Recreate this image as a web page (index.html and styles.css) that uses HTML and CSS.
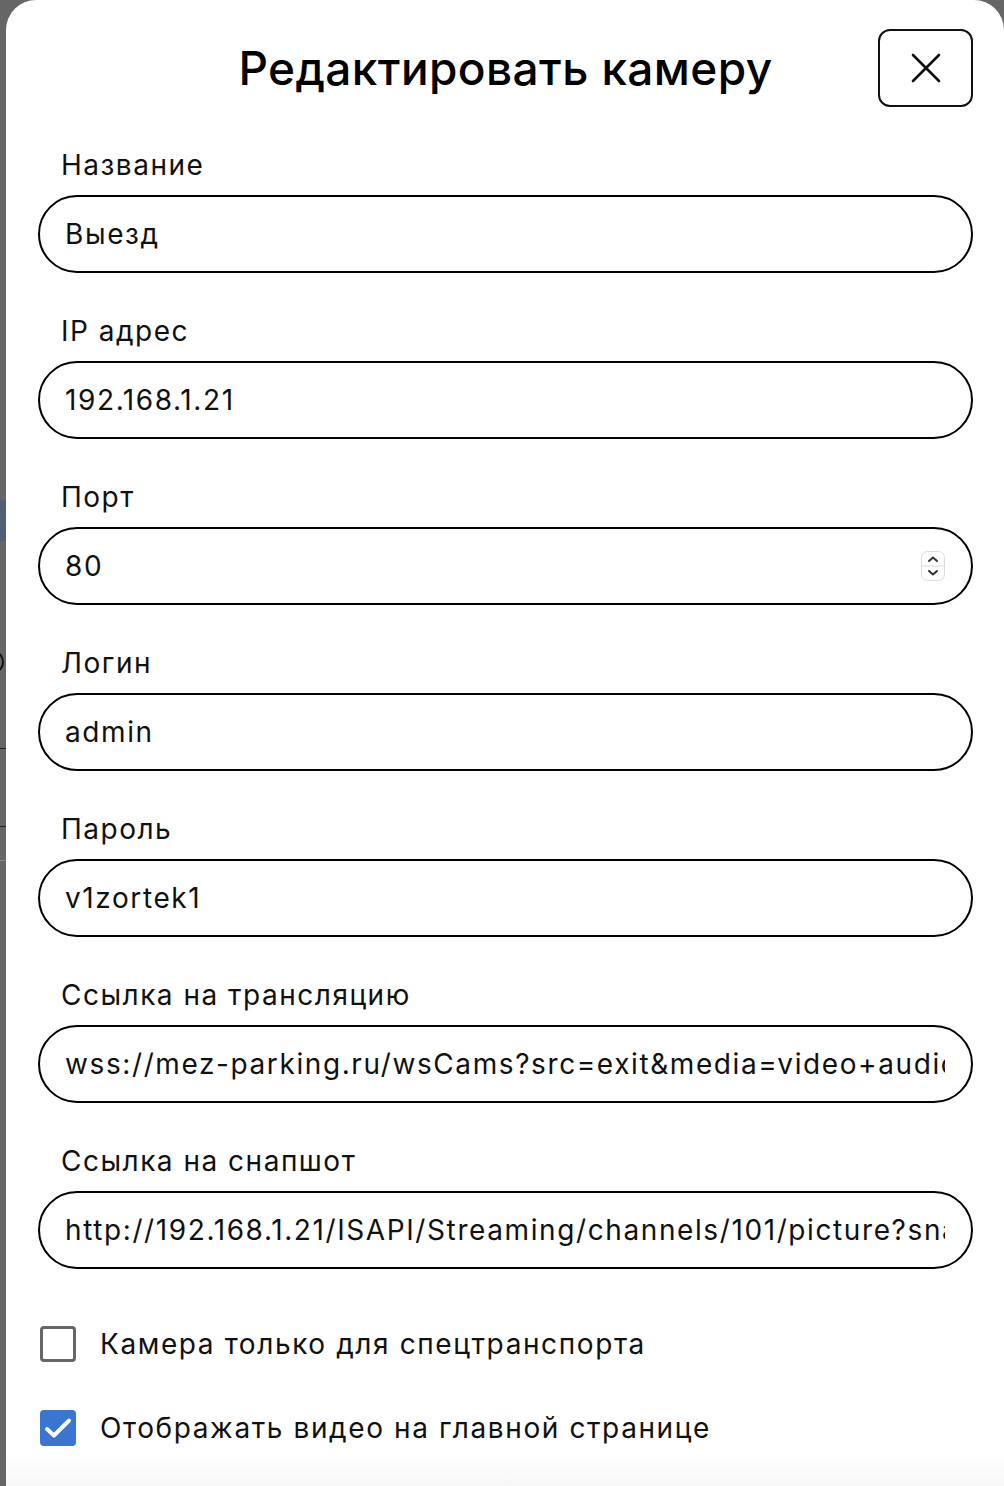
FILE: index.html
```html
<!DOCTYPE html>
<html lang="ru">
<head>
<meta charset="utf-8">
<title>Редактировать камеру</title>
<link rel="stylesheet" href="styles.css">
</head>
<body>
<div class="backdrop">
  <div class="behind">
    <div class="behind-bar"></div>
    <div class="behind-ring"></div>
    <div class="behind-line l1"></div>
    <div class="behind-line l2"></div>
    <div class="behind-line l3"></div>
  </div>
  <div class="modal">
    <header class="modal-header">
      <h1 class="modal-title">Редактировать камеру</h1>
      <button class="close-btn" type="button" aria-label="Закрыть">
        <svg width="30" height="30" viewBox="0 0 30 30"><path d="M2 2 L28 28 M28 2 L2 28" stroke="#111" stroke-width="2.6" stroke-linecap="round" fill="none"/></svg>
      </button>
    </header>
    <form class="form">
      <div class="group">
        <label class="label">Название</label>
        <div class="field"><input class="field-input" type="text" value="Выезд"></div>
      </div>
      <div class="group">
        <label class="label">IP адрес</label>
        <div class="field"><input class="field-input" type="text" value="192.168.1.21"></div>
      </div>
      <div class="group">
        <label class="label">Порт</label>
        <div class="field">
          <input class="field-input" type="text" value="80">
          <span class="spinner">
            <svg width="24" height="30" viewBox="0 0 24 30">
              <rect x="0.5" y="0.5" width="23" height="29" rx="6" fill="#fff" stroke="#dcdcdc"/>
              <line x1="1" y1="15" x2="23" y2="15" stroke="#dcdcdc"/>
              <path d="M8 10 L12 6.5 L16 10" stroke="#333" stroke-width="2" fill="none" stroke-linecap="round" stroke-linejoin="round"/>
              <path d="M8 20 L12 23.5 L16 20" stroke="#333" stroke-width="2" fill="none" stroke-linecap="round" stroke-linejoin="round"/>
            </svg>
          </span>
        </div>
      </div>
      <div class="group">
        <label class="label">Логин</label>
        <div class="field"><input class="field-input" type="text" value="admin"></div>
      </div>
      <div class="group">
        <label class="label">Пароль</label>
        <div class="field"><input class="field-input" type="text" value="v1zortek1"></div>
      </div>
      <div class="group">
        <label class="label">Ссылка на трансляцию</label>
        <div class="field"><input class="field-input" type="text" value="wss://mez-parking.ru/wsCams?src=exit&amp;media=video+audio"></div>
      </div>
      <div class="group">
        <label class="label">Ссылка на снапшот</label>
        <div class="field"><input class="field-input" type="text" value="http://192.168.1.21/ISAPI/Streaming/channels/101/picture?snapShotImageType=JPEG"></div>
      </div>
      <div class="checks">
        <div class="check-row">
          <span class="box"></span>
          <span class="check-text">Камера только для спецтранспорта</span>
        </div>
        <div class="check-row">
          <span class="box checked">
            <svg width="36" height="36" viewBox="0 0 36 36"><path d="M7 19 L14 25.5 L29 10.5" stroke="#fff" stroke-width="4" fill="none" stroke-linecap="round" stroke-linejoin="round"/></svg>
          </span>
          <span class="check-text">Отображать видео на главной странице</span>
        </div>
      </div>
    </form>
  </div>
</div>
</body>
</html>
```
FILE: styles.css
```css
* { box-sizing: border-box; }
html, body { margin: 0; padding: 0; }
body {
  background: #666666;
  font-family: Inter, "Noto Sans", sans-serif;
  color: #111;
  overflow: hidden;
}
.backdrop {
  display: flex;
  min-height: 1486px;
}
.behind {
  width: 6px;
  flex: none;
  position: relative;
}
.behind-bar { position: absolute; left: 0; top: 500px; width: 6px; height: 41px; background: #505f72; }
.behind-ring { position: absolute; left: -12px; top: 652px; width: 16px; height: 20px; border: 2px solid #111; border-radius: 50%; }
.behind-line { position: absolute; left: 0; width: 6px; height: 1px; }
.behind-line.l1 { top: 748px; background: #222; }
.behind-line.l2 { top: 826px; background: #222; }
.behind-line.l3 { top: 860px; background: #888; }

.modal {
  flex: 1;
  background: #fff;
  border-radius: 30px 30px 0 0;
  padding: 29px 31px 0 32px;
  height: 1486px;
  background-image: linear-gradient(to bottom, #fff 0, #fff 1452px, #f7f7f7 1486px);
}
.modal-header {
  display: grid;
  grid-template-columns: 1fr auto 1fr;
  align-items: center;
}
.modal-title {
  grid-column: 2;
  margin: 0;
  font-size: 46px;
  font-weight: 500;
  line-height: 56px;
  letter-spacing: 0.4px;
  color: #000;
}
.close-btn {
  grid-column: 3;
  justify-self: end;
  width: 95px;
  height: 78px;
  border: 2px solid #111;
  border-radius: 12px;
  background: #fff;
  display: flex;
  align-items: center;
  justify-content: center;
  padding: 0;
}
.form {
  display: flex;
  flex-direction: column;
  gap: 42px;
  padding-top: 42px;
}
.group {
  display: flex;
  flex-direction: column;
  gap: 14px;
}
.label {
  font-size: 28px;
  line-height: 32px;
  letter-spacing: 1.5px;
  padding-left: 23px;
  color: #111;
}
.field {
  height: 78px;
  border: 2px solid #000;
  border-radius: 39px;
  display: flex;
  align-items: center;
  padding: 0 26px 0 25px;
  gap: 10px;
}
.field-input {
  flex: 1;
  min-width: 0;
  border: none;
  outline: none;
  background: transparent;
  font-family: inherit;
  font-size: 28px;
  letter-spacing: 1.6px;
  color: #111;
  padding: 0;
  height: 40px;
}
.spinner { display: flex; margin-right: 0; }
.checks {
  display: flex;
  flex-direction: column;
  gap: 48px;
  padding-top: 15px;
  padding-left: 2px;
}
.check-row {
  display: flex;
  align-items: center;
  gap: 24px;
}
.box {
  width: 36px;
  height: 36px;
  flex: none;
  border: 3px solid #666;
  border-radius: 4px;
  background: #fff;
  display: flex;
}
.box.checked {
  border: none;
  background: #3a75cf;
}
.check-text {
  font-size: 28px;
  line-height: 36px;
  letter-spacing: 1.6px;
  color: #111;
}
```
